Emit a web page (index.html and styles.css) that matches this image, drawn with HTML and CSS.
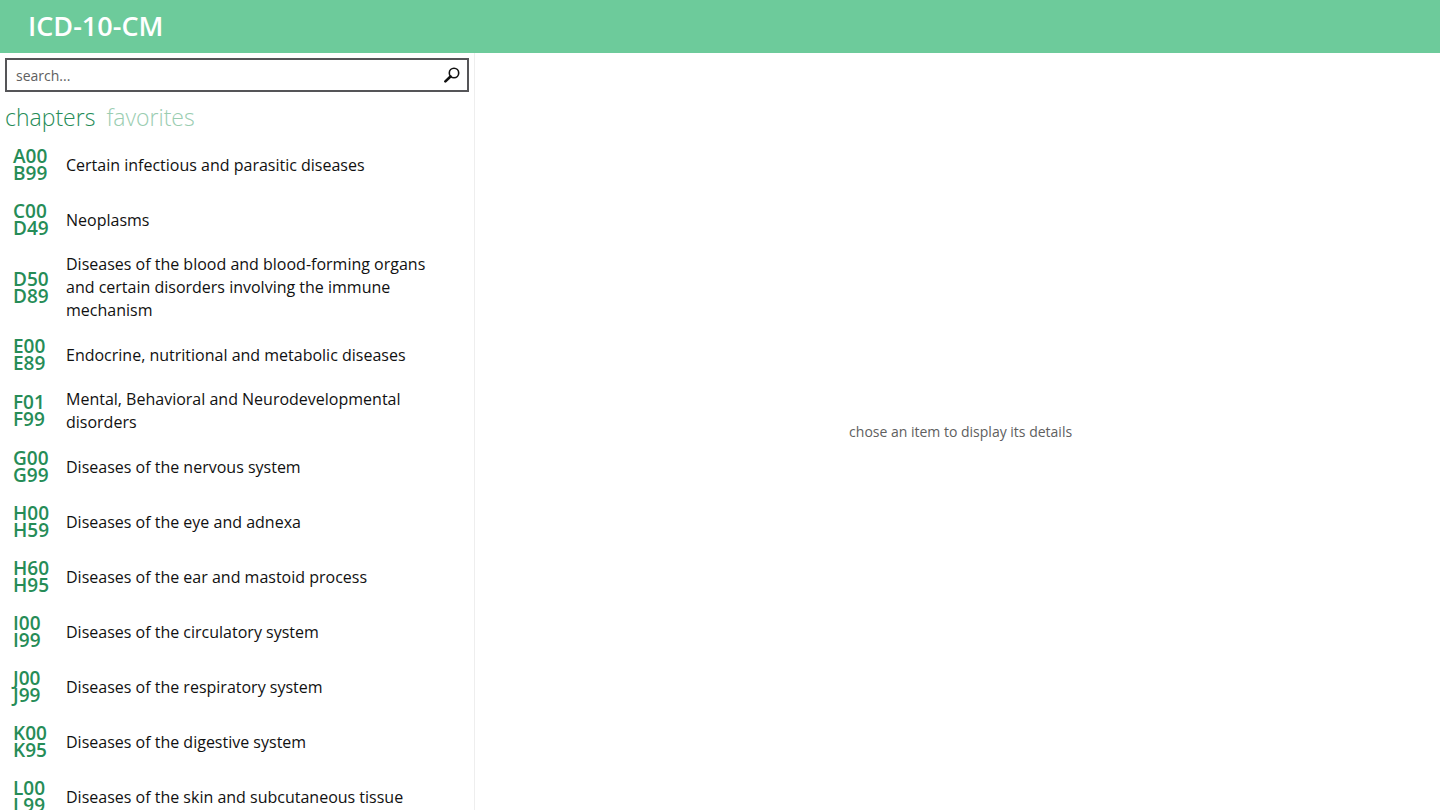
FILE: index.html
```html
<!DOCTYPE html>
<html lang="en">
<head>
<meta charset="utf-8">
<meta name="viewport" content="width=device-width, initial-scale=1">
<title>ICD-10-CM</title>
<link rel="stylesheet" href="styles.css">
</head>
<body>
<header class="topbar"><h1 class="title">ICD-10-CM</h1></header>
<div class="content">
  <aside class="sidebar">
    <form class="search" role="search">
      <input class="search-input" type="text" placeholder="search..." aria-label="Search">
      <button class="search-button" type="submit" aria-label="Search">
        <svg class="search-icon" viewBox="0 0 16 16" aria-hidden="true">
          <circle cx="10" cy="6" r="4.7" fill="none" stroke="currentColor" stroke-width="1.6"/>
          <path d="M6.5 9.5 1.4 14.4" fill="none" stroke="currentColor" stroke-width="2.6" stroke-linecap="round"/>
        </svg>
      </button>
    </form>
    <nav class="tabs">
      <a class="tab tab-active" href="#chapters">chapters</a>
      <a class="tab" href="#favorites">favorites</a>
    </nav>
    <ul class="chapters" id="chapters">
      <li><a class="chapter" href="#A00"><span class="code">A00<br>B99</span><span class="name">Certain infectious and parasitic diseases</span></a></li>
      <li><a class="chapter" href="#C00"><span class="code">C00<br>D49</span><span class="name">Neoplasms</span></a></li>
      <li><a class="chapter" href="#D50"><span class="code">D50<br>D89</span><span class="name">Diseases of the blood and blood-forming organs and certain disorders involving the immune mechanism</span></a></li>
      <li><a class="chapter" href="#E00"><span class="code">E00<br>E89</span><span class="name">Endocrine, nutritional and metabolic diseases</span></a></li>
      <li><a class="chapter" href="#F01"><span class="code">F01<br>F99</span><span class="name">Mental, Behavioral and Neurodevelopmental disorders</span></a></li>
      <li><a class="chapter" href="#G00"><span class="code">G00<br>G99</span><span class="name">Diseases of the nervous system</span></a></li>
      <li><a class="chapter" href="#H00"><span class="code">H00<br>H59</span><span class="name">Diseases of the eye and adnexa</span></a></li>
      <li><a class="chapter" href="#H60"><span class="code">H60<br>H95</span><span class="name">Diseases of the ear and mastoid process</span></a></li>
      <li><a class="chapter" href="#I00"><span class="code">I00<br>I99</span><span class="name">Diseases of the circulatory system</span></a></li>
      <li><a class="chapter" href="#J00"><span class="code">J00<br>J99</span><span class="name">Diseases of the respiratory system</span></a></li>
      <li><a class="chapter" href="#K00"><span class="code">K00<br>K95</span><span class="name">Diseases of the digestive system</span></a></li>
      <li><a class="chapter" href="#L00"><span class="code">L00<br>L99</span><span class="name">Diseases of the skin and subcutaneous tissue</span></a></li>
    </ul>
  </aside>
  <main class="details"><p class="hint">chose an item to display its details</p></main>
</div>
</body>
</html>
```

FILE: styles.css
```css
* { box-sizing: border-box; }

body {
  display: flex;
  flex-direction: column;
  height: 100vh;
  margin: 0;
  overflow: hidden;
  background: #fff;
  color: #111;
  font-family: "Segoe UI", "Open Sans", "Noto Sans", sans-serif;
  font-size: 16px;
}

.topbar {
  flex: none;
  padding: 8px 28px 9px;
  background: #6dcb9b;
}

.title {
  margin: 0;
  color: #fff;
  font-size: 27px;
  font-weight: 600;
  line-height: 36px;
}

.content {
  display: flex;
  flex: 1;
  min-height: 0;
}

.sidebar {
  display: flex;
  flex-direction: column;
  width: 33%;
  padding: 5px 5px 0;
  border-right: 1px solid #eee;
}

.search {
  display: flex;
  flex: none;
  height: 34px;
  border: 2px solid #555558;
}

.search-input {
  flex: 1;
  min-width: 0;
  padding: 0 9px;
  border: 0;
  outline: 0;
  background: #fff;
  color: #222;
  font: inherit;
  font-size: 14px;
}

.search-input::placeholder {
  color: #606060;
  opacity: 1;
}

.search-button {
  display: flex;
  align-items: center;
  justify-content: center;
  width: 30px;
  padding: 0;
  border: 0;
  background: #fff;
  color: #111;
}

.search-icon {
  width: 16px;
  height: 16px;
}

.tabs {
  display: flex;
  flex: none;
  gap: 11px;
  padding: 9px 0 4px;
}

.tab {
  color: #9acdb1;
  font-size: 23px;
  font-weight: 300;
  line-height: 32px;
  text-decoration: none;
}

.tab-active { color: #268c57; }

.chapters {
  flex: 1;
  min-height: 0;
  margin: 0;
  padding: 0;
  overflow: hidden;
  list-style: none;
}

.chapter {
  display: flex;
  align-items: center;
  min-height: 55px;
  padding: 6px 16px 5px 8px;
  color: inherit;
  text-decoration: none;
}

.code {
  flex: none;
  width: 53px;
  color: #268c57;
  font-size: 19px;
  font-weight: 600;
  line-height: 17px;
}

.name { line-height: 23px; }

.details {
  display: flex;
  flex: 1;
  align-items: center;
  justify-content: center;
  padding: 0 0 0 6px;
}

.hint {
  margin: 0;
  color: #606060;
  font-size: 14px;
}
```
